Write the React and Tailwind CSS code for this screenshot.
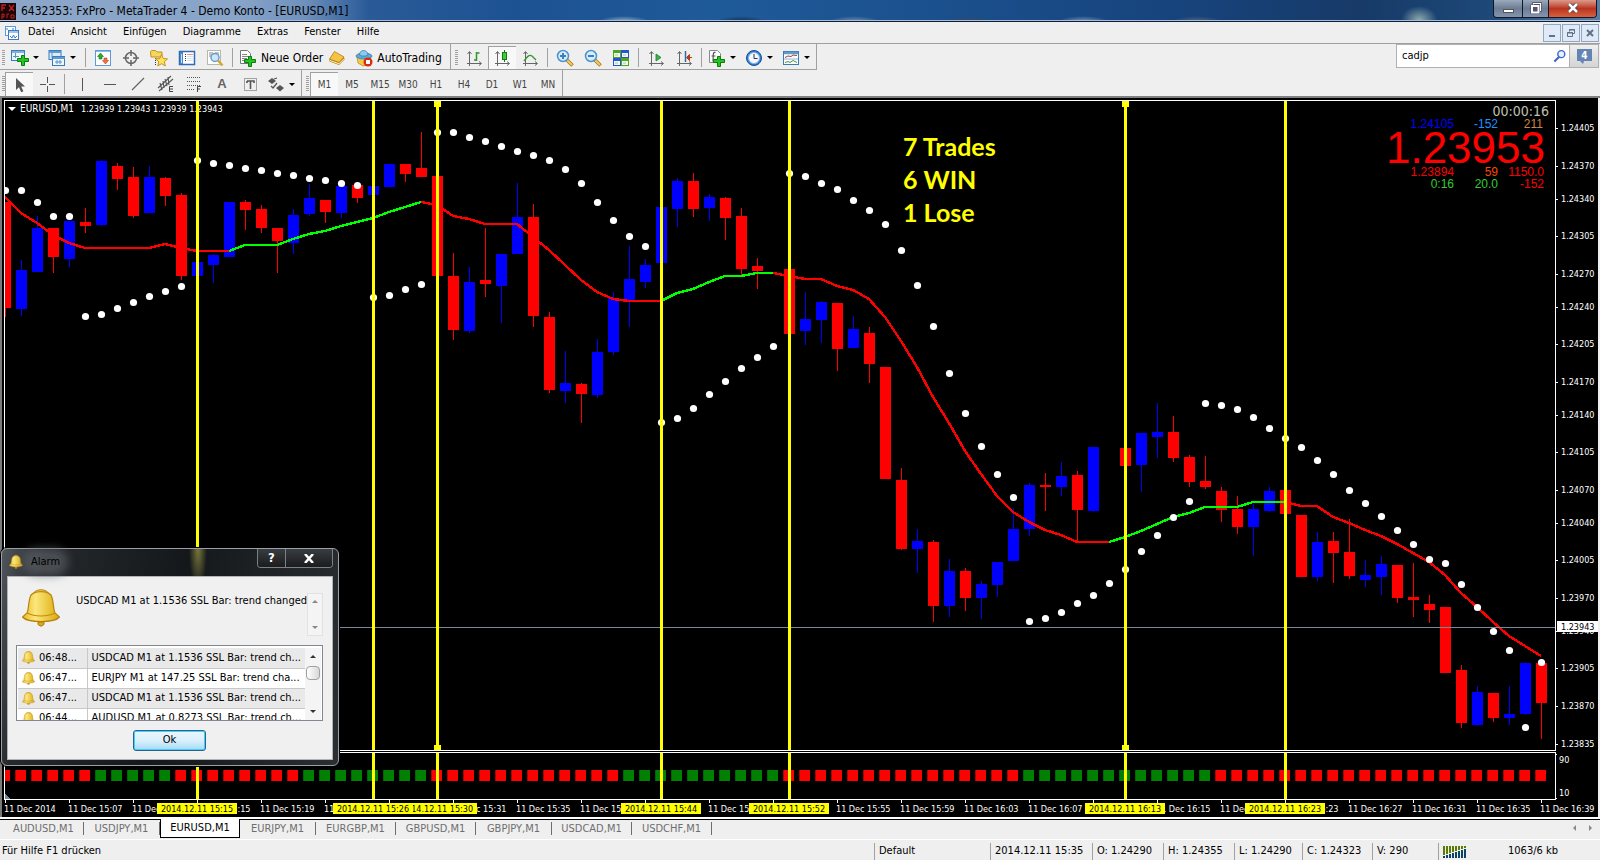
import React from "react";

/* ---------- chart data ---------- */

const R = "#ff0000";
const B = "#0000ff";

// bar index, wick top, wick bottom, body top, body bottom, colour
const candles = [
  [0, 202, 317, 202, 308, R], [1, 260, 316, 270, 309, B], [2, 216, 272, 228, 272, B], [3, 228, 273, 228, 257, R],
  [4, 221, 267, 221, 259, B], [5, 208, 233, 222, 226, R], [6, 160, 226, 161, 225, B], [7, 163, 190, 166, 179, R],
  [8, 167, 218, 177, 216, R], [9, 166, 213, 177, 213, B], [10, 177, 206, 178, 196, R], [11, 193, 280, 195, 276, R],
  [12, 262, 276, 262, 276, B], [13, 254, 283, 255, 265, B], [14, 202, 257, 202, 257, B], [15, 200, 230, 202, 210, R],
  [16, 205, 233, 209, 228, R], [17, 228, 273, 228, 241, R], [18, 209, 254, 215, 243, B], [19, 184, 216, 198, 214, B],
  [20, 200, 223, 200, 212, R], [21, 186, 218, 186, 213, B], [22, 185, 203, 185, 198, R], [23, 186, 195, 186, 195, B],
  [24, 164, 187, 164, 187, B], [25, 164, 182, 164, 174, R], [26, 132, 177, 168, 177, R], [27, 176, 276, 176, 276, R],
  [28, 253, 340, 276, 330, R], [29, 267, 333, 282, 331, B], [30, 228, 297, 280, 284, R], [31, 254, 323, 254, 286, B],
  [32, 183, 254, 217, 254, B], [33, 204, 327, 217, 316, R], [34, 312, 393, 317, 390, R], [35, 351, 403, 383, 391, B],
  [36, 383, 423, 384, 394, R], [37, 339, 398, 352, 395, B], [38, 292, 355, 298, 352, B], [39, 246, 327, 279, 300, B],
  [40, 259, 288, 265, 282, B], [41, 207, 263, 207, 263, B], [42, 178, 227, 181, 209, B], [43, 173, 217, 181, 209, R],
  [44, 194, 221, 197, 208, B], [45, 197, 240, 198, 218, R], [46, 208, 275, 216, 269, R], [47, 258, 289, 266, 271, R],
  [49, 269, 334, 269, 334, R], [50, 292, 345, 319, 331, B], [51, 301, 343, 302, 320, B], [52, 303, 371, 303, 349, R],
  [53, 316, 348, 329, 348, B], [54, 327, 383, 333, 364, R], [55, 367, 479, 367, 479, R], [56, 468, 550, 480, 549, R],
  [57, 529, 573, 541, 549, B], [58, 540, 622, 542, 606, R], [59, 559, 617, 571, 606, B], [60, 568, 611, 571, 598, R],
  [61, 581, 619, 584, 598, B], [62, 562, 597, 562, 585, B], [63, 508, 561, 529, 561, B], [64, 483, 536, 485, 529, B],
  [65, 473, 511, 485, 487, R], [66, 462, 496, 476, 487, B], [67, 471, 542, 475, 510, R], [68, 447, 512, 447, 511, B],
  [70, 448, 466, 448, 466, R], [71, 433, 492, 433, 465, B], [72, 403, 458, 432, 437, B], [73, 416, 462, 432, 458, R],
  [74, 455, 487, 457, 482, R], [75, 456, 489, 481, 487, R], [76, 487, 522, 491, 510, R], [77, 496, 534, 509, 527, R],
  [78, 504, 556, 509, 527, B], [79, 487, 512, 491, 511, B], [80, 490, 514, 490, 514, R], [81, 515, 577, 515, 577, R],
  [82, 532, 581, 542, 577, B], [83, 532, 583, 541, 553, R], [84, 519, 579, 552, 576, R], [85, 560, 587, 575, 580, B],
  [86, 556, 595, 564, 577, B], [87, 565, 603, 565, 598, R], [88, 563, 617, 597, 600, R], [89, 595, 623, 604, 610, R],
  [90, 607, 673, 607, 673, R], [91, 665, 728, 670, 723, R], [92, 686, 726, 692, 725, B], [93, 693, 722, 693, 718, R],
  [94, 686, 725, 714, 718, B], [95, 662, 715, 663, 714, B], [96, 663, 739, 663, 703, R],
];

// runs of dots: first bar index, then one height per bar
const dotRuns = [
  [0, [190, 190, 202, 216, 216]],
  [5, [316, 314, 308, 302, 296, 291, 286]],
  [12, [160, 163, 165, 168, 170, 173, 175, 178, 180, 183, 185]],
  [23, [297, 295, 289, 284]],
  [27, [132, 132, 137, 141, 146, 151, 155, 160, 169, 183, 202, 220, 236, 246]],
  [41, [422, 418, 408, 394, 381, 368, 357, 346]],
  [49, [173, 176, 183, 189, 200, 210, 224, 250, 285, 326, 373, 413, 446, 474, 497]],
  [64, [621, 618, 612, 603, 595, 583, 569, 551, 535, 517, 501]],
  [75, [403, 405, 409, 417, 428, 438, 447, 460, 474, 490, 503, 516, 530, 544, 559, 563, 584, 607, 631, 650]],
  [95, [727]],
  [96, [662]],
];

const G = "#00ff00";
const maRuns = [
  [0, R, [197, 213, 223, 235, 243, 248, 248, 248, 248, 248, 244, 248, 251, 251, 251]],
  [14, G, [251, 245, 245, 245, 239, 234, 231, 226, 222, 218, 212, 207, 202]],
  [26, R, [202, 205, 216, 219, 224, 224, 224, 237, 250, 265, 280, 292, 299, 301, 301, 301]],
  [41, G, [301, 293, 289, 282, 276, 276, 273, 273]],
  [48, R, [273, 276, 279, 279, 286, 290, 299, 317, 341, 367, 397, 423, 451, 474, 496, 512, 522, 530, 535, 542, 542, 542]],
  [69, G, [542, 537, 531, 524, 517, 513, 507, 507, 507, 502, 502, 502]],
  [80, R, [502, 506, 506, 517, 523, 530, 536, 544, 553, 562, 575, 593, 607, 622, 636, 646, 656]],
];

const prices = [
  ["1.24405", 128], ["1.24370", 166], ["1.24340", 199], ["1.24305", 236], ["1.24270", 274], ["1.24240", 307],
  ["1.24205", 344], ["1.24170", 382], ["1.24140", 415], ["1.24105", 452], ["1.24070", 490], ["1.24040", 523],
  ["1.24005", 560], ["1.23970", 598], ["1.23940", 631], ["1.23905", 668], ["1.23870", 706], ["1.23835", 744],
];

const times = [
  "11 Dec 2014", "11 Dec 15:07", "11 Dec 15:11", "11 Dec 15:15", "11 Dec 15:19", "11 Dec 15:23", "11 Dec 15:27",
  "11 Dec 15:31", "11 Dec 15:35", "11 Dec 15:39", "11 Dec 15:43", "11 Dec 15:47", "11 Dec 15:51", "11 Dec 15:55",
  "11 Dec 15:59", "11 Dec 16:03", "11 Dec 16:07", "11 Dec 16:11", "11 Dec 16:15", "11 Dec 16:19", "11 Dec 16:23",
  "11 Dec 16:27", "11 Dec 16:31", "11 Dec 16:35", "11 Dec 16:39",
];

const marks = [
  [12, "2014.12.11 15:15", false], [27, "2014.12.11 15:30", true], [23, "2014.12.11 15:26", false],
  [41, "2014.12.11 15:44", false], [49, "2014.12.11 15:52", false], [70, "2014.12.11 16:13", true],
  [80, "2014.12.11 16:23", false],
];

const barX = (i) => 5 + 16 * i;
const isGreen = (i) => (i >= 6 && i <= 10) || (i >= 19 && i <= 26) || (i >= 39 && i <= 48) || (i >= 64 && i <= 75);
const bars = Array.from({ length: 97 }, (_, i) => i);

function Chart() {
  return (
    <svg viewBox="0 98 1600 719" className="block h-auto w-full bg-black" role="img" aria-label="EURUSD M1 chart">
      <defs>
        <clipPath id="plot"><rect x="5" y="98" width="1550" height="719" /></clipPath>
      </defs>
      <rect x="0" y="98" width="2" height="719" fill="#7a7a7a" />
      <rect x="1598" y="98" width="2" height="719" fill="#efefef" />

      <g fill="#fff">
        <path d="M8 107h8l-4 4z" />
        <text x="20" y="112" fontSize="10">EURUSD,M1</text>
        <text x="81" y="112" fontSize="9">1.23939 1.23943 1.23939 1.23943</text>
      </g>

      <g clipPath="url(#plot)" shapeRendering="crispEdges">
        {candles.map(([i, wt, wb, bt, bb, c]) => (
          <g key={i} fill={c}>
            <rect x={barX(i)} y={wt} width="1" height={wb - wt} />
            <rect x={barX(i) - 5} y={bt} width="11" height={bb - bt} />
          </g>
        ))}
        {bars.map((i) => (
          <g key={i}>
            <rect x={barX(i) - 6} y="770" width="11" height="11" fill={isGreen(i) ? "#006400" : "#b00000"} />
            <rect x={barX(i) - 5} y="770" width="10" height="11" fill={isGreen(i) ? "#008000" : R} />
          </g>
        ))}
        {maRuns.map(([s, c, ys]) => (
          <polyline key={s} fill="none" stroke={c} strokeWidth="2.400" points={ys.map((y, k) => `${barX(s + k)},${y}`).join(" ")} />
        ))}
        <rect x="5" y="627" width="1550" height="1" fill="#778899" />
      </g>
      <g clipPath="url(#plot)" fill="#fff">
        {dotRuns.map(([s, ys]) => ys.map((y, k) => <circle key={s + k} cx={barX(s + k) + 0.5} cy={y + 0.5} r="3.6" />))}
      </g>

      <g shapeRendering="crispEdges">
        <g fill="#fff">
          <rect x="4" y="100" width="1552" height="1" />
          <rect x="4" y="100" width="1" height="651" />
          <rect x="1555" y="100" width="1" height="651" />
          <rect x="4" y="750" width="1552" height="1" />
          <rect x="4" y="752" width="1552" height="1" />
          <rect x="4" y="752" width="1" height="48" />
          <rect x="1555" y="752" width="1" height="48" />
          <rect x="4" y="799" width="1552" height="1" />
          {times.map((t, k) => <rect key={k} x={5 + 64 * k} y="800" width="1" height="3" />)}
          {prices.map(([p, y]) => <rect key={p} x="1556" y={y} width="2" height="1" />)}
          <rect x="1556" y="754" width="1" height="1" />
          <rect x="1556" y="798" width="1" height="1" />
        </g>
        <path d="M5 794v5h5z" fill="#778899" />
        {marks.map(([i, t, handle]) => (
          <g key={i} fill="#ffff00">
            <rect x={barX(i) - 1} y="101" width="3" height="649" />
            <rect x={barX(i) - 1} y="753" width="3" height="46" />
            {handle && (
              <>
                <rect x={barX(i) - 3} y="101" width="7" height="6" />
                <rect x={barX(i) - 3} y="745" width="7" height="5" />
                <rect x={barX(i)} y="103" width="1" height="1" fill="#fff" />
                <rect x={barX(i)} y="748" width="1" height="1" fill="#fff" />
              </>
            )}
          </g>
        ))}
      </g>

      <g fill="#fff" fontSize="9">
        {prices.map(([p, y]) => <text key={p} x="1561" y={y + 3}>{p}</text>)}
        <text x="1559" y="763">90</text>
        <text x="1559" y="796">10</text>
        {times.map((t, k) => <text key={k} x={4 + 64 * k} y="812">{t}</text>)}
      </g>
      <rect x="1557" y="621" width="41" height="11" fill="#fff" />
      <text x="1561" y="630" fontSize="9" fill="#000">1.23943</text>
      {marks.map(([i, t]) => (
        <g key={i} fontSize="9">
          <rect x={barX(i) - 40} y="803" width="80" height="11" fill="#ffff00" />
          <text x={barX(i)} y="812" textAnchor="middle" fill="#000">{t}</text>
        </g>
      ))}

      <g className="font-['Lato','Open_Sans',sans-serif] font-bold" fontSize="25" fill="#ffff00">
        <text x="903" y="156">7 Trades</text>
        <text x="903" y="189">6 WIN</text>
        <text x="903" y="222">1 Lose</text>
      </g>

      <text x="1549" y="116" textAnchor="end" fontSize="14" fill="#c0c0b0">00:00:16</text>
      <g className="font-['Liberation_Sans',sans-serif]" fontSize="12" textAnchor="end">
        <text x="1454" y="128" fill="#0000ff">1.24105</text>
        <text x="1498" y="128" fill="#1e90ff">-152</text>
        <text x="1543" y="128" fill="#cd853f">211</text>
        <text x="1545" y="163" fontSize="44" fill={R}>1.23953</text>
        <text x="1454" y="176" fill={R}>1.23894</text>
        <text x="1498" y="176" fill="#ff4500">59</text>
        <text x="1544" y="176" fill={R}>1150.0</text>
        <text x="1454" y="188" fill="#32cd32">0:16</text>
        <text x="1498" y="188" fill="#32cd32">20.0</text>
        <text x="1544" y="188" fill={R}>-152</text>
      </g>
    </svg>
  );
}

/* ---------- icons ---------- */

function Svg({ children, w = 18, h = 18 }) {
  return <svg width={w} height={h} viewBox={`0 0 ${w} ${h}`} className="shrink-0" aria-hidden="true">{children}</svg>;
}

const icons = {
  newChart: (
    <Svg>
      <rect x=".5" y="1.5" width="13" height="10" fill="#eef6fd" stroke="#3a7cb8" />
      <path d="M1 3h12" stroke="#7fb2dd" strokeWidth="2" />
      <path d="M4.500 4v5M2 7.500h6" stroke="#5b93c4" fill="none" />
      <path d="M10.500 6.500h3v3h4v3h-4v4h-3v-4h-4v-3h4z" fill="#25c425" stroke="#0b7d0b" />
    </Svg>
  ),
  profiles: (
    <Svg>
      <rect x="1" y="1.500" width="12" height="9" fill="#dcebf8" stroke="#3a7cb8" />
      <path d="M1 3h12" stroke="#5f9bd0" strokeWidth="2" />
      <rect x="4.500" y="7.500" width="12" height="9" fill="#eef6fd" stroke="#3a7cb8" />
      <path d="M5 9h12" stroke="#5f9bd0" strokeWidth="2" />
      <path d="M4 4v5M7 13h7M9 11v4M12 11v4" stroke="#5b93c4" fill="none" />
    </Svg>
  ),
  market: (
    <Svg>
      <rect x="1.500" y="1.500" width="15" height="15" fill="#fff" stroke="#5a9bd8" />
      <path d="M2 2.500h14" stroke="#8bbce8" />
      <path d="M6.500 4l3 3.500H8v2.500H5V7.500H3.500z" fill="#2fa82f" stroke="#167a16" strokeWidth=".6" />
      <path d="M11.500 15l-3-3.500H10V9h3v2.500h1.500z" fill="#f0704a" stroke="#c03f1c" strokeWidth=".6" />
    </Svg>
  ),
  crosshair: (
    <Svg>
      <circle cx="9" cy="9" r="5.500" fill="none" stroke="#666" strokeWidth="1.500" />
      <path d="M9 1v6M9 11v6M1 9h6M11 9h6" stroke="#666" strokeWidth="1.500" />
    </Svg>
  ),
  favourites: (
    <Svg>
      <path d="M.5 2.500l1-1h4l1.500 1.500h5v5h-11z" fill="#f7d65a" stroke="#bd9124" />
      <path d="M5.500 9v7" stroke="#333" strokeDasharray="1 1" />
      <path d="M11.500 5.500l1.800 4 4.200.4-3.200 2.800 1 4.200-3.800-2.200-3.700 2.200 1-4.200-3.200-2.800 4.200-.4z" fill="#ffe35c" stroke="#c6921a" />
    </Svg>
  ),
  terminal: (
    <Svg>
      <rect x="1.500" y="2.500" width="15" height="13" fill="#fff" stroke="#2d6cb5" strokeWidth="1.500" />
      <path d="M2 3h3v12H2z" fill="#4785cc" />
      <path d="M3.500 5v9" stroke="#cfe3f8" />
      <path d="M7 5.500h1M7 7.500h1M7 9.500h1M7 11.500h1" stroke="#333" />
      <path d="M9 5.500h6" stroke="#e09090" />
      <path d="M9 7.500h6M9 9.500h6M9 11.500h6" stroke="#d4e2f2" />
    </Svg>
  ),
  tester: (
    <Svg>
      <rect x="1.500" y="1.500" width="13" height="14" fill="#fff" stroke="#b8b8a8" />
      <path d="M4 3v5M6 3v3M12 3v3M10 3v3" stroke="#888" />
      <circle cx="9" cy="8.500" r="4" fill="#cde6fa" stroke="#6a9ccb" strokeWidth="1.500" />
      <path d="M12 11.500l4.500 5" stroke="#d6a52c" strokeWidth="2.500" />
    </Svg>
  ),
  order: (
    <Svg>
      <path d="M1.500 1.500h7l3 3v10h-10z" fill="#fff" stroke="#777" />
      <path d="M3 5.500h5M3 7.500h7M3 9.500h5M3 11.500h4" stroke="#888" />
      <path d="M9.500 7.500h3v3h4v3h-4v4h-3v-4h-4v-3h4z" fill="#25c425" stroke="#0b7d0b" />
    </Svg>
  ),
  editor: (
    <Svg>
      <path d="M6.500 3L16 8l.6 2.500L11 16 1.500 12.500V10z" fill="#b97e14" />
      <path d="M6.500 2.500L16 8l-5 5.500L1.500 10z" fill="#f4c545" stroke="#b98217" strokeWidth=".8" />
      <path d="M2 11.500l9 3.300 5-5" stroke="#fff3c0" fill="none" />
    </Svg>
  ),
  auto: (
    <Svg>
      <path d="M2 8h14l-2 7-6 2-5-3z" fill="#f2ca48" stroke="#c08f1c" strokeWidth=".8" />
      <ellipse cx="9" cy="7" rx="8" ry="3" fill="#5aa9d8" stroke="#3480b2" strokeWidth=".8" />
      <path d="M4.500 6c0-6 8-6 8.500 0-2 1.500-6.500 1.500-8.500 0z" fill="#8ccbee" stroke="#3480b2" strokeWidth=".8" />
      <circle cx="13" cy="13" r="4.500" fill="#d92a12" />
      <rect x="11" y="11" width="4" height="4" fill="#fff" />
    </Svg>
  ),
  barChart: (
    <Svg>
      <Axes />
      <path d="M11.500 3v9M11.500 4h3M9 11h3" stroke="#2f962f" strokeWidth="1.500" fill="none" />
    </Svg>
  ),
  candleChart: (
    <Svg>
      <Axes />
      <path d="M11.500 1v12" stroke="#147a14" />
      <rect x="9.500" y="3.500" width="4" height="7" fill="#3ccc3c" stroke="#147a14" />
    </Svg>
  ),
  lineChart: (
    <Svg>
      <Axes />
      <path d="M3 12c3-4 5-7 8-5l4 4" stroke="#2f962f" strokeWidth="1.300" fill="none" />
    </Svg>
  ),
  zoomIn: (
    <Svg><Lens /><path d="M4 7h6M7 4v6" stroke="#3d7fb8" strokeWidth="2" /></Svg>
  ),
  zoomOut: (
    <Svg><Lens /><path d="M4 7h6" stroke="#3d7fb8" strokeWidth="2" /></Svg>
  ),
  tile: (
    <Svg>
      <rect x="1" y="1" width="8" height="8" fill="#4ea61c" />
      <rect x="9" y="1" width="8" height="8" fill="#2456d0" />
      <rect x="1" y="9" width="8" height="8" fill="#2456d0" />
      <rect x="9" y="9" width="8" height="8" fill="#4ea61c" />
      <path d="M2 4h6v4H2zM10 4h6v4h-6zM2 12h6v4H2zM10 12h6v4h-6z" fill="#f2f8ee" />
      <path d="M3 6h3M11 6h3M3 14h3M11 14h3" stroke="#a8c0b0" />
    </Svg>
  ),
  shift: (
    <Svg><Axes /><path d="M9 5l5 3.500L9 12z" fill="#3ab54a" stroke="#1d7d2a" strokeWidth=".8" /></Svg>
  ),
  autoscroll: (
    <Svg>
      <Axes />
      <path d="M10.500 2v11" stroke="#2c6ea3" strokeWidth="1.500" />
      <path d="M17 8.500h-4M14.500 5.500L11.500 8.500l3 3z" stroke="#b83b14" fill="#b83b14" />
    </Svg>
  ),
  indicators: (
    <Svg>
      <path d="M1.500 1.500h8l3 3v9h-11z" fill="#fff" stroke="#888" />
      <path d="M7.500 3.500c-3-1-2 3-2.500 9M3.500 7h4" stroke="#555" fill="none" strokeWidth="1.200" />
      <path d="M9.500 7.500h3v3h4v3h-4v4h-3v-4h-4v-3h4z" fill="#25c425" stroke="#0b7d0b" />
    </Svg>
  ),
  clock: (
    <Svg>
      <circle cx="9" cy="9" r="7.500" fill="#2f7fd4" stroke="#174f92" />
      <circle cx="9" cy="9" r="5.500" fill="#f4f9ff" stroke="#8ab4e0" />
      <path d="M9 5v4.500h3.500" stroke="#334" fill="none" />
    </Svg>
  ),
  template: (
    <Svg>
      <rect x="1.500" y="2.500" width="15" height="13" fill="#fff" stroke="#3a7cb8" />
      <path d="M2 4h14" stroke="#5f9bd0" strokeWidth="2.500" />
      <path d="M3 8.500l3-1.500 3 .5 2-1.500 4 .5" stroke="#a04020" fill="none" />
      <path d="M2 10h14" stroke="#8bb4da" />
      <path d="M3 13.500l3-1 2 1 3-2 4 2" stroke="#3a9a4a" fill="none" />
    </Svg>
  ),
  cursor: (
    <Svg><path d="M5 2v12l3-2.800 2.200 5 2.200-1-2.200-4.700H14z" fill="#555" /></Svg>
  ),
  cross: (
    <Svg><path d="M9.500 2v6M9.500 11v6M2 9.500h6M11 9.500h6" stroke="#555" shapeRendering="crispEdges" /></Svg>
  ),
  vline: <Svg><path d="M9.500 3v13" stroke="#555" shapeRendering="crispEdges" /></Svg>,
  hline: <Svg><path d="M3 9.500h12" stroke="#555" shapeRendering="crispEdges" /></Svg>,
  trend: <Svg><path d="M3 15L15 3" stroke="#666" strokeWidth="1.300" /></Svg>,
  channel: (
    <Svg>
      <path d="M1 13L14 1M2 16L16 4M3 8l2 7M6 6l1 7M8 4l2 7M11 2l1 8" stroke="#555" strokeWidth="1.100" />
      <path d="M16 11.500h-3.500v5H16M12.500 14H16" stroke="#444" fill="none" />
    </Svg>
  ),
  fibo: (
    <Svg>
      <path d="M2 2.500h14M2 6.500h14M2 10.500h14M2 14.500h8" stroke="#555" strokeDasharray="1 1" />
      <path d="M12.500 17v-5.500H16M12.500 14H15" stroke="#444" fill="none" />
    </Svg>
  ),
  label: (
    <Svg>
      <rect x="3.500" y="3.500" width="12" height="12" fill="none" stroke="#555" strokeDasharray="1 1" />
      <path d="M6 6h7v2M6 6v2M9.500 6v8" stroke="#555" strokeWidth="1.600" fill="none" />
    </Svg>
  ),
  arrows: (
    <Svg>
      <path d="M5 3l4 3-4 3-4-3zM13 10l4 3-4 3.500-4-3.500z" fill="#555" />
      <path d="M4 11l2 2 4-5M7 4l3-1" stroke="#555" fill="none" strokeWidth="1.300" />
    </Svg>
  ),
};

function Axes() {
  return <path d="M4.500 3v14M2 14.500h14M2.500 5l2-2.500 2 2.500M14 12.500l2.500 2-2.500 2" stroke="#666" fill="none" />;
}

function Lens() {
  return (
    <>
      <path d="M11 11l5.500 5.500" stroke="#a8761a" strokeWidth="3.500" />
      <path d="M11 11l5 5" stroke="#f4cd5a" strokeWidth="2" />
      <circle cx="7" cy="7" r="5.500" fill="#d5ecfb" stroke="#4d93c9" strokeWidth="1.500" />
    </>
  );
}

function Bell({ size }) {
  return (
    <svg width={size} height={size} viewBox="0 0 38 38" className="shrink-0" aria-hidden="true">
      <defs>
        <linearGradient id="gold" x1="0" x2="1"><stop offset="0" stopColor="#e8b820" /><stop offset=".35" stopColor="#fbe77c" /><stop offset="1" stopColor="#dba808" /></linearGradient>
      </defs>
      <path d="M16 33h6v2.500l-3 1.800-3-1.800z" fill="#e0a818" stroke="#a8780c" />
      <path d="M13 3c2-3 10-3 12 0l4 3c3 6 2 14 4 18l4.500 4c-5 6-32 6-37 0L5 24c2-4 1-12 4-18z" fill="url(#gold)" stroke="#b5820e" strokeWidth="1.200" />
      <path d="M5 24c8 4 20 4 28 0M12 4c4-1.500 10-1.500 14 0" stroke="#c08c10" fill="none" strokeWidth="1.200" />
    </svg>
  );
}

/* ---------- toolbars ---------- */

const Grip = () => <span className="my-1 w-[3px] shrink-0 bg-[repeating-linear-gradient(#a0a0a0_0_1px,transparent_1px_2px)]" />;
const Sep = () => <span className="mx-[3px] my-[2px] w-px shrink-0 bg-[#a0a0a0]" />;

function Tool({ icon, name, pressed }) {
  return (
    <button
      type="button"
      aria-label={name}
      className={`flex w-7 shrink-0 items-center justify-center ${pressed ? "border-l border-t border-[#a0a0a0] bg-[#f8f8f8]" : ""}`}
    >
      {icons[icon]}
    </button>
  );
}

function Drop({ icon, name }) {
  return (
    <button type="button" aria-label={name} className="flex w-[37px] shrink-0 items-center gap-1 pl-[3px]">
      {icons[icon]}
      <Caret />
    </button>
  );
}

const Caret = () => <span className="border-x-[3px] border-t-[3px] border-x-transparent border-t-black" />;

function Standard() {
  return (
    <div className="flex h-[26px] border-b border-[#a0a0a0] text-xs">
      <div className="flex border-r border-[#a0a0a0] pl-[2px] pr-1 pt-[2px]">
        <Grip />
        <span className="w-[3px]" />
        <Drop icon="newChart" name="Neues Chart" />
        <Drop icon="profiles" name="Profile" />
        <Sep />
        <Tool icon="market" name="Marktübersicht" />
        <Tool icon="crosshair" name="Datenfenster" />
        <Tool icon="favourites" name="Navigator" />
        <Tool icon="terminal" name="Terminal" />
        <Tool icon="tester" name="Strategietester" />
        <Sep />
        <button type="button" className="flex items-center gap-1 pl-[3px]">
          {icons.order}
          <span>Neue Order</span>
        </button>
        <Tool icon="editor" name="MetaEditor" />
        <button type="button" className="flex items-center gap-1 px-1">
          {icons.auto}
          <span>AutoTrading</span>
        </button>
      </div>
      <div className="flex border-r border-[#a0a0a0] pl-1 pt-[2px]">
        <Grip />
        <span className="w-[2px]" />
        <Tool icon="barChart" name="Balkenchart" />
        <Tool icon="candleChart" name="Kerzenchart" pressed />
        <Tool icon="lineChart" name="Linienchart" />
        <Sep />
        <Tool icon="zoomIn" name="Vergrößern" />
        <Tool icon="zoomOut" name="Verkleinern" />
        <Tool icon="tile" name="Fenster anordnen" />
        <Sep />
        <Tool icon="shift" name="Autoscroll" />
        <Tool icon="autoscroll" name="Chart verschieben" />
        <Sep />
        <Drop icon="indicators" name="Indikatoren" />
        <Drop icon="clock" name="Perioden" />
        <Drop icon="template" name="Vorlagen" />
      </div>
    </div>
  );
}

const frames = ["M1", "M5", "M15", "M30", "H1", "H4", "D1", "W1", "MN"];

function LineTools() {
  return (
    <div className="flex h-7 border-b-2 border-[#808080] text-[10px] text-[#444]">
      <div className="flex border-r border-[#a0a0a0] pl-[2px] pt-[2px]">
        <Grip />
        <Tool icon="cursor" name="Cursor" pressed />
        <Tool icon="cross" name="Fadenkreuz" />
        <Sep />
        <Tool icon="vline" name="Vertikale Linie" />
        <Tool icon="hline" name="Horizontale Linie" />
        <Tool icon="trend" name="Trendlinie" />
        <Tool icon="channel" name="Kanal" />
        <Tool icon="fibo" name="Fibonacci" />
        <button type="button" className="w-7 font-['Liberation_Sans',sans-serif] text-[13px] font-bold text-[#666]">A</button>
        <Tool icon="label" name="Textlabel" />
        <Drop icon="arrows" name="Pfeile" />
      </div>
      <div className="flex border-r border-[#a0a0a0] pl-1 pt-[2px]">
        <Grip />
        <span className="w-px" />
        {frames.map((f) => (
          <button
            key={f}
            type="button"
            className={`w-7 text-center ${f === "M1" ? "border-l border-t border-[#a0a0a0] bg-[#f8f8f8]" : ""}`}
          >
            {f}
          </button>
        ))}
      </div>
    </div>
  );
}

function TitleBar() {
  return (
    <header className="flex h-[22px] items-start justify-between border-b border-[#0d1f3c] bg-[radial-gradient(ellipse_18px_14px_at_88.7%_95%,#a9c4bccc,transparent),radial-gradient(ellipse_26px_6px_at_39%_105%,#c8d8e8cc,transparent),radial-gradient(ellipse_26px_6px_at_46.3%_105%,#101c30cc,transparent),radial-gradient(ellipse_26px_6px_at_53.4%_105%,#9aa8b8cc,transparent),radial-gradient(ellipse_26px_6px_at_60.6%_105%,#404850cc,transparent),radial-gradient(ellipse_26px_6px_at_67.7%_105%,#a8b4c4cc,transparent),radial-gradient(ellipse_26px_6px_at_74.8%_105%,#70747ccc,transparent),linear-gradient(90deg,#8ba6c8_0%,#88a4c8_15%,#6f91bc_19%,#2a5a98_23%,#1d5292_32%,#1f5a98_45%,#1a4f8c_60%,#17427a_75%,#173a68_85%,#1d4878_93%,#5c7ea4_100%)] shadow-[inset_0_-1px_0_#a8bcd4]">
      <div className="flex items-center gap-[5px] pt-[2px]">
        <svg width="16" height="17" viewBox="0 0 16 17" aria-hidden="true">
          <rect width="16" height="17" fill="#1a0606" />
          <path d="M2 8V2h4M2 5h3M9 2l5 6M14 2L9 8" stroke="#c02020" fill="none" strokeWidth="1.300" />
          <path d="M2 16v-5h2v3H2M7 15v-4h2M11 12h3v3h-3z" stroke="#c02020" fill="none" />
        </svg>
        <h1 className="text-xs leading-[18px] text-black">6432353: FxPro - MetaTrader 4 - Demo Konto - [EURUSD,M1]</h1>
      </div>
      <div className="mr-[3px] flex h-[18px] overflow-hidden rounded-b border border-t-0 border-[#101828]">
        <button type="button" aria-label="Minimieren" className="flex w-7 justify-center bg-linear-to-b from-[#9ba9bb] via-[#6c7d95] to-[#8495ad] pt-[9px]">
          <span className="h-1 w-[11px] border border-[#555] bg-white" />
        </button>
        <button type="button" aria-label="Wiederherstellen" className="flex w-[27px] justify-center border-x border-[#101828] bg-linear-to-b from-[#9ba9bb] via-[#6c7d95] to-[#8495ad] pt-[2px]">
          <svg width="12" height="12" viewBox="0 0 12 12" aria-hidden="true">
            <path d="M3.500 3V1.500h7v7H9" fill="none" stroke="#445" strokeWidth="2.500" />
            <path d="M3.500 3V1.500h7v7H9" fill="none" stroke="#fff" strokeWidth="1.200" />
            <rect x="2" y="4" width="6.500" height="6.500" fill="#556" stroke="#445" strokeWidth="3" />
            <rect x="2" y="4" width="6.500" height="6.500" fill="#556" stroke="#fff" strokeWidth="2" />
          </svg>
        </button>
        <button type="button" aria-label="Schließen" className="flex w-[47px] justify-center bg-linear-to-b from-[#dc9a8c] via-[#b83420] to-[#d8603c] pt-[3px]">
          <svg width="12" height="10" viewBox="0 0 12 10" aria-hidden="true">
            <path d="M2 1l8 8M10 1L2 9" stroke="#444" strokeWidth="4" />
            <path d="M2 1l8 8M10 1L2 9" stroke="#fff" strokeWidth="2.500" />
          </svg>
        </button>
      </div>
    </header>
  );
}

const menu = ["Datei", "Ansicht", "Einfügen", "Diagramme", "Extras", "Fenster", "Hilfe"];

function MenuBar() {
  return (
    <nav className="flex h-[22px] items-center justify-between border-b border-[#a0a0a0] pr-px">
      <div className="flex items-center">
        <svg width="16" height="16" viewBox="0 0 16 16" className="ml-1 mr-2" aria-hidden="true">
          <rect x="1.500" y="1.500" width="10" height="9" fill="#fff" stroke="#5a9bd8" />
          <rect x="4.500" y="5.500" width="10" height="9" fill="#fff" stroke="#3a7cc8" />
          <path d="M5 7h9" stroke="#7fb0e4" strokeWidth="1.500" />
          <path d="M6 11l2 2 1.500-3 1.500 3 2-2M3 3v2M9 3v2" stroke="#3a7cc8" fill="none" />
        </svg>
        {menu.map((m) => (
          <button key={m} type="button" className="mr-4">{m}</button>
        ))}
      </div>
      <div className="flex gap-px">
        {["Minimieren", "Wiederherstellen", "Schließen"].map((n, k) => (
          <button key={n} type="button" aria-label={`Chart ${n}`} className="flex h-[18px] w-[18px] items-center justify-center border border-[#8fa8c4] bg-[#dfeaf6]">
            <svg width="10" height="10" viewBox="0 0 10 10" fill="none" stroke="#5c728c" strokeWidth="1.500" aria-hidden="true">
              {k === 0 && <path d="M2 8h6" strokeWidth="2" />}
              {k === 1 && <path d="M3.500 3.500v-2h5v4h-2M1.500 4.500h5v4h-5zM3 2h6M1 5h6" strokeWidth="1" />}
              {k === 2 && <path d="M2 2l6 6M8 2L2 8" strokeWidth="2" />}
            </svg>
          </button>
        ))}
      </div>
    </nav>
  );
}

function Search() {
  return (
    <div className="mr-px flex h-6">
      <label className="flex w-[174px] items-center border border-[#b0b0b0] bg-white pl-[5px] pr-[3px]">
        <input aria-label="Suche" defaultValue="cadjp" className="w-full min-w-0 bg-transparent text-black outline-none" />
        <svg width="14" height="14" viewBox="0 0 14 14" aria-hidden="true">
          <circle cx="9" cy="5" r="3.800" fill="#e8f0fc" stroke="#3a62c8" strokeWidth="1.500" />
          <path d="M6.500 8L1.500 13" stroke="#3a62c8" strokeWidth="2.200" />
        </svg>
      </label>
      <button type="button" aria-label="4 Nachrichten" className="flex w-[29px] items-center justify-center border border-l-0 border-[#b0b0b0] bg-linear-to-b from-[#f0f0f0] to-[#d4d4d4]">
        <svg width="17" height="17" viewBox="0 0 17 17" aria-hidden="true">
          <path d="M1 1h15v12H8l-1 3-3-3H1z" fill="#6484b4" />
          <text x="8.500" y="11" textAnchor="middle" fontSize="10" fontWeight="bold" fill="#fff">4</text>
        </svg>
      </button>
    </div>
  );
}

/* ---------- alarm dialog ---------- */

const alerts = [
  ["06:48...", "USDCAD M1 at 1.1536 SSL Bar: trend ch..."],
  ["06:47...", "EURJPY M1 at 147.25 SSL Bar: trend cha..."],
  ["06:47...", "USDCAD M1 at 1.1536 SSL Bar: trend ch..."],
  ["06:44...", "AUDUSD M1 at 0.8273 SSL Bar: trend ch..."],
];

const Up = ({ dim }) => (
  <span className={`border-x-[3px] border-b-[3px] border-x-transparent ${dim ? "border-b-[#888]" : "border-b-[#333]"}`} />
);
const Down = ({ dim }) => (
  <span className={`border-x-[3px] border-t-[3px] border-x-transparent ${dim ? "border-t-[#888]" : "border-t-[#333]"}`} />
);

function Alarm() {
  return (
    <section
      role="dialog"
      aria-label="Alarm"
      className="absolute left-px top-[450px] w-[338px] rounded-md border border-[#9aa0a6] bg-[radial-gradient(ellipse_9px_40px_at_196px_0px,#77773a,transparent),linear-gradient(100deg,#50565c_0%,#26292c_12%,#15181a_50%,#2c2f32_100%)] px-[5px] pb-[5px] shadow-[0_0_0_1px_#000]"
    >
      <div className="flex h-[27px] items-start justify-between">
        <div className="flex items-center gap-[6px] pl-[2px] pt-[5px]">
          <Bell size={14} />
          <h2 className="rounded-full bg-[#60656a]/60 px-[2px] leading-4 text-black shadow-[0_0_8px_6px_rgba(96,101,106,0.6)]">Alarm</h2>
        </div>
        <div className="flex h-[19px] overflow-hidden rounded-b border border-t-0 border-[#7c8084] text-white">
          <button type="button" aria-label="Hilfe" className="w-7 border-r border-[#7c8084] bg-linear-to-b from-[#3a3d40] to-[#1a1c1e] text-[13px] font-bold leading-4">?</button>
          <button type="button" aria-label="Alarm schließen" className="flex w-[46px] items-center justify-center bg-linear-to-b from-[#3a3d40] to-[#1a1c1e]">
            <svg width="10" height="9" viewBox="0 0 10 9" aria-hidden="true"><path d="M1 0l8 9M9 0L1 9" stroke="#fff" strokeWidth="2.500" /></svg>
          </button>
        </div>
      </div>
      <div className="flex flex-col border border-[#b0b4b8] bg-[#f0f0f0] pb-2 pl-2 pr-[9px] pt-3">
        <div className="flex h-14 items-start pl-[6px]">
          <Bell size={38} />
          <p className="flex-1 whitespace-nowrap pl-4 leading-6 text-black">USDCAD M1 at 1.1536 SSL Bar: trend changed</p>
          <div className="mt-1 flex h-[43px] w-4 flex-col items-center justify-between border border-[#e2e2e2] bg-[#f4f4f4] py-[6px]">
            <Up dim />
            <Down dim />
          </div>
        </div>
        <div className="flex h-[76px] overflow-hidden border border-[#828790] bg-white px-px pt-[2px]">
          <table className="w-full table-fixed self-start border-collapse text-black">
            <tbody>
              {alerts.map(([t, m], k) => (
                <tr key={k} className={`h-5 border-b border-[#c8c8c8] ${k % 2 ? "bg-white" : "bg-[#e9e9e9]"}`}>
                  <td className="w-[69px] border-r border-[#c8c8c8] p-0">
                    <span className="flex items-center gap-1 pl-1">
                      <Bell size={13} />
                      {t}
                    </span>
                  </td>
                  <td className="whitespace-nowrap p-0 pl-1">{m}</td>
                </tr>
              ))}
            </tbody>
          </table>
          <div className="flex w-4 shrink-0 flex-col items-center bg-[#f4f4f4] py-[7px]">
            <Up />
            <span className="mt-2 h-[14px] w-[14px] rounded-sm border border-[#a0a0a0] bg-linear-to-r from-white to-[#d8d8d8]" />
            <span className="flex-1" />
            <Down />
          </div>
        </div>
        <button
          type="button"
          className="mt-[9px] h-[21px] w-[73px] self-center rounded-[3px] border border-[#2c628b] bg-linear-to-b from-[#eaf6fd] via-[#d9f0fc] to-[#a7d9f5] text-black shadow-[inset_0_0_0_1px_#40d0ff]"
        >
          Ok
        </button>
      </div>
    </section>
  );
}

/* ---------- tabs and status ---------- */

const tabs = [
  ["AUDUSD,M1", "w-[80px]"], ["USDJPY,M1", "w-[76px]"], ["EURUSD,M1", "w-[80px]"], ["EURJPY,M1", "w-[76px]"], ["EURGBP,M1", "w-[80px]"],
  ["GBPUSD,M1", "w-[80px]"], ["GBPJPY,M1", "w-[76px]"], ["USDCAD,M1", "w-[80px]"], ["USDCHF,M1", "w-[80px]"],
];

function Tabs() {
  return (
    <div className="flex h-[23px] items-start justify-between border-b border-white pl-1 pr-2 text-[#6e6e6e] shadow-[inset_0_2px_0_#fff,inset_0_3px_0_#000]">
      <div role="tablist" className="flex pt-[2px]">
        {tabs.map(([t, w]) => {
          const on = t === "EURUSD,M1";
          return (
            <button
              key={t}
              type="button"
              role="tab"
              aria-selected={on}
              className={`${w} ${on ? "h-[19px] border border-t-0 border-black bg-white text-black" : "my-[3px] h-[13px] border-r border-[#6e6e6e] leading-[13px]"}`}
            >
              {t}
            </button>
          );
        })}
      </div>
      <div className="flex gap-[13px] pt-2">
        <span className="border-y-[3px] border-r-[3px] border-y-transparent border-r-[#888]" />
        <span className="border-y-[3px] border-l-[3px] border-y-transparent border-l-[#888]" />
      </div>
    </div>
  );
}

function Cell({ w, children }) {
  return <div className={`mt-[3px] flex items-center border-l border-[#a0a0a0] pl-1 ${w}`}>{children}</div>;
}

function Status() {
  return (
    <footer className="flex h-5 text-black">
      <div className="flex flex-1 items-center pl-[2px] pt-[3px]">Für Hilfe F1 drücken</div>
      <Cell w="w-[116px]">Default</Cell>
      <Cell w="w-[102px]">2014.12.11 15:35</Cell>
      <Cell w="w-[71px]">O: 1.24290</Cell>
      <Cell w="w-[71px]">H: 1.24355</Cell>
      <Cell w="w-[68px]">L: 1.24290</Cell>
      <Cell w="w-[70px]">C: 1.24323</Cell>
      <Cell w="w-[66px]">V: 290</Cell>
      <Cell w="w-[70px]">
        <svg width="24" height="12" viewBox="0 0 24 12" shapeRendering="crispEdges" aria-hidden="true">
          {[0, 1, 2, 3, 4, 5, 6, 7].map((k) => (
            <g key={k}>
              <rect x={k * 3} y="0" width="2" height={9 - k} fill="#5a7a00" />
              <rect x={k * 3} y={10 - k} width="2" height={2 + k} fill="#0c4466" />
            </g>
          ))}
        </svg>
      </Cell>
      <div className="flex w-[92px] items-center pt-[3px]">1063/6 kb</div>
    </footer>
  );
}

export default function App() {
  return (
    <div className="flex min-h-screen flex-col bg-[#efefef] font-['DejaVu_Sans_Condensed','Noto_Sans',sans-serif] text-[11px] text-black">
      <TitleBar />
      <MenuBar />
      <div className="flex items-start justify-between">
        <Standard />
        <Search />
      </div>
      <LineTools />
      <main className="relative">
        <Chart />
        <Alarm />
      </main>
      <Tabs />
      <Status />
    </div>
  );
}
